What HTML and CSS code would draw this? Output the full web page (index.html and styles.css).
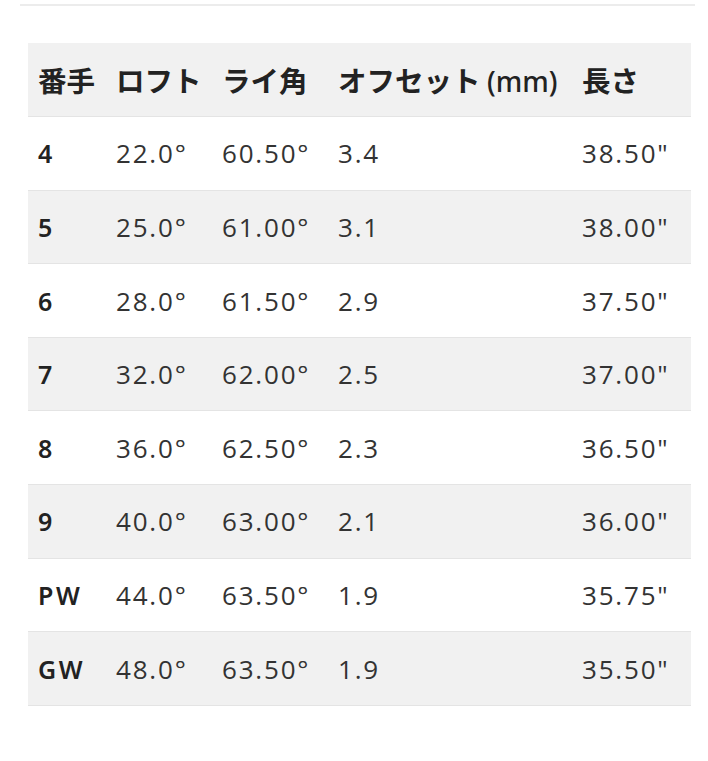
FILE: index.html
```html
<!DOCTYPE html>
<html lang="ja">
<head>
<meta charset="utf-8">
<link rel="stylesheet" href="styles.css">
</head>
<body>
<div class="page">
  <div class="topline"></div>
  <table class="spec">
    <colgroup>
      <col class="c1"><col class="c2"><col class="c3"><col class="c4"><col class="c5">
    </colgroup>
    <thead>
      <tr><th>番手</th><th>ロフト</th><th>ライ角</th><th>オフセット <span class="unit">(mm)</span></th><th>長さ</th></tr>
    </thead>
    <tbody>
      <tr><td class="num">4</td><td>22.0°</td><td>60.50°</td><td>3.4</td><td>38.50"</td></tr>
      <tr class="alt"><td class="num">5</td><td>25.0°</td><td>61.00°</td><td>3.1</td><td>38.00"</td></tr>
      <tr><td class="num">6</td><td>28.0°</td><td>61.50°</td><td>2.9</td><td>37.50"</td></tr>
      <tr class="alt"><td class="num">7</td><td>32.0°</td><td>62.00°</td><td>2.5</td><td>37.00"</td></tr>
      <tr><td class="num">8</td><td>36.0°</td><td>62.50°</td><td>2.3</td><td>36.50"</td></tr>
      <tr class="alt"><td class="num">9</td><td>40.0°</td><td>63.00°</td><td>2.1</td><td>36.00"</td></tr>
      <tr><td class="num">PW</td><td>44.0°</td><td>63.50°</td><td>1.9</td><td>35.75"</td></tr>
      <tr class="alt"><td class="num">GW</td><td>48.0°</td><td>63.50°</td><td>1.9</td><td>35.50"</td></tr>
    </tbody>
  </table>
</div>
</body>
</html>
```
FILE: styles.css
```css
html, body {
  margin: 0;
  padding: 0;
  background: #ffffff;
}
.page {
  padding: 4px 17px 0 28px;
  font-family: "Open Sans", "Noto Sans CJK JP", sans-serif;
  color: #333333;
}
.topline {
  height: 2px;
  background: #ececec;
  margin: 0 -4px 37px -8px;
}
.spec {
  width: 663px;
  border-collapse: collapse;
  table-layout: fixed;
}
.c1 { width: 78px; }
.c2 { width: 106px; }
.c3 { width: 116px; }
.c4 { width: 244px; }
.c5 { width: 119px; }
.spec th, .spec td {
  height: 73.6px;
  padding: 0 0 0 10px;
  text-align: left;
  vertical-align: middle;
  border-bottom: 1.6px solid #e4e4e4;
  white-space: nowrap;
  box-sizing: border-box;
}
.spec thead tr {
  background: #f1f1f1;
}
.spec th {
  font-family: "Noto Sans CJK JP", sans-serif;
  font-weight: 700;
  font-size: 28.5px;
  color: #222222;
  letter-spacing: 0;
}
.spec th .unit {
  font-family: "Noto Sans", "Noto Sans CJK JP", sans-serif;
  font-weight: 500;
  font-size: 28px;
  letter-spacing: 0;
}
.spec td {
  font-size: 26px;
  font-weight: 400;
  color: #333333;
  letter-spacing: 1.8px;
}
.spec td.num {
  font-family: "Noto Sans", sans-serif;
  font-weight: 600;
  color: #222222;
  font-size: 25px;
  letter-spacing: 2.5px;
}
.spec tr.alt {
  background: #f1f1f1;
}
```
